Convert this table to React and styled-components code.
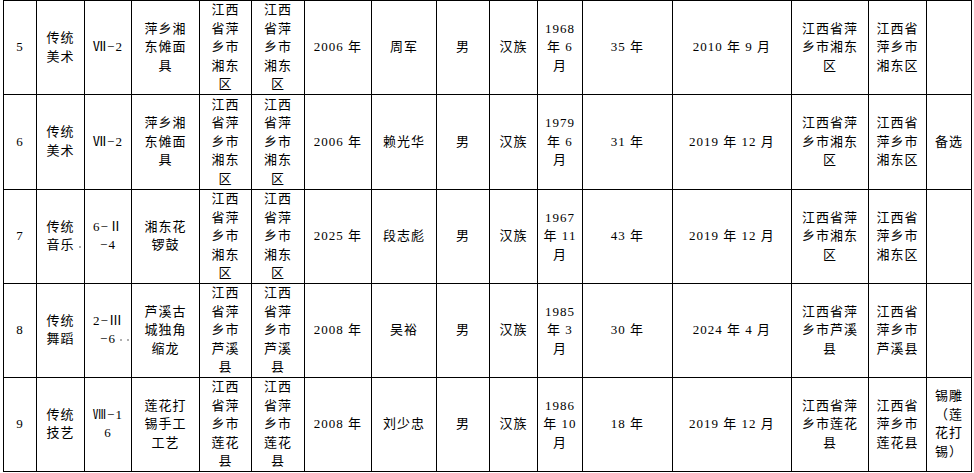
import React from 'react';
import styled, { createGlobalStyle } from 'styled-components';

const GlobalStyle = createGlobalStyle`
  html, body {
    margin: 0;
    padding: 0;
    background: #ffffff;
  }
`;

const Page = styled.div`
  padding: 0 0 0 3px;
`;

const Table = styled.table`
  border-collapse: collapse;
  table-layout: fixed;
  width: 969px;
  font-family: 'Liberation Serif', 'Noto Sans CJK SC', serif;
  font-size: 13px;
  color: #000;
`;

const Row = styled.tr`
  height: ${(props) => props.$h}px;
`;

const Cell = styled.td`
  border: 1px solid #000;
  padding: 0;
  text-align: center;
  vertical-align: middle;
  line-height: 18.6px;
  letter-spacing: 1px;
  white-space: pre;
  overflow: hidden;
`;

// small grey formatting marks trailing some cells; kept out of the centering
const Marks = styled.span`
  display: inline-flex;
  gap: 5px;
  vertical-align: middle;
  margin-left: 4px;
  margin-right: ${(props) => -(props.$n * 2 + (props.$n - 1) * 5 + 4)}px;
`;

const Mark = styled.span`
  width: 2px;
  height: 2px;
  background: #b0b0b0;
`;

const widths = [33, 48, 47, 68, 52, 53, 67, 65, 53, 48, 45, 90, 119, 77, 58, 45];

const dots = (n) => (
  <Marks $n={n}>
    {Array.from({ length: n }, (_, i) => (
      <Mark key={i} />
    ))}
  </Marks>
);

const rows = [
  {
    h: 94,
    cells: [
      '5', '传统\n美术', 'Ⅶ−2', '萍乡湘\n东傩面\n具', '江西\n省萍\n乡市\n湘东\n区', '江西\n省萍\n乡市\n湘东\n区',
      '2006 年', '周军', '男', '汉族', '1968\n年 6\n月', '35 年', '2010 年 9 月',
      '江西省萍\n乡市湘东\n区', '江西省\n萍乡市\n湘东区', '',
    ],
  },
  {
    h: 95,
    cells: [
      '6', '传统\n美术', 'Ⅶ−2', '萍乡湘\n东傩面\n具', '江西\n省萍\n乡市\n湘东\n区', '江西\n省萍\n乡市\n湘东\n区',
      '2006 年', '赖光华', '男', '汉族', '1979\n年 6\n月', '31 年', '2019 年 12 月',
      '江西省萍\n乡市湘东\n区', '江西省\n萍乡市\n湘东区', '备选',
    ],
  },
  {
    h: 92,
    cells: [
      '7', <>{'传统\n音乐'}{dots(1)}</>, '6−Ⅱ\n−4', '湘东花\n锣鼓', '江西\n省萍\n乡市\n湘东\n区', '江西\n省萍\n乡市\n湘东\n区',
      '2025 年', '段志彪', '男', '汉族', '1967\n年 11\n月', '43 年', '2019 年 12 月',
      '江西省萍\n乡市湘东\n区', '江西省\n萍乡市\n湘东区', '',
    ],
  },
  {
    h: 94,
    cells: [
      '8', '传统\n舞蹈', <>{'2−Ⅲ\n−6'}{dots(2)}</>, '芦溪古\n城独角\n缩龙', '江西\n省萍\n乡市\n芦溪\n县', '江西\n省萍\n乡市\n芦溪\n县',
      '2008 年', '吴裕', '男', '汉族', '1985\n年 3\n月', '30 年', '2024 年 4 月',
      '江西省萍\n乡市芦溪\n县', '江西省\n萍乡市\n芦溪县', '',
    ],
  },
  {
    h: 94,
    cells: [
      '9', '传统\n技艺', 'Ⅷ−1\n6', '莲花打\n锡手工\n工艺', '江西\n省萍\n乡市\n莲花\n县', '江西\n省萍\n乡市\n莲花\n县',
      '2008 年', '刘少忠', '男', '汉族', '1986\n年 10\n月', '18 年', '2019 年 12 月',
      '江西省萍\n乡市莲花\n县', '江西省\n萍乡市\n莲花县', '锡雕\n（莲\n花打\n锡）',
    ],
  },
];

const App = () => (
  <>
    <GlobalStyle />
    <Page>
      <Table>
        <colgroup>
          {widths.map((w, i) => (
            <col key={i} style={{ width: w }} />
          ))}
        </colgroup>
        <tbody>
          {rows.map((row, r) => (
            <Row key={r} $h={row.h}>
              {row.cells.map((c, i) => (
                <Cell key={i}>{c}</Cell>
              ))}
            </Row>
          ))}
        </tbody>
      </Table>
    </Page>
  </>
);

export default App;
